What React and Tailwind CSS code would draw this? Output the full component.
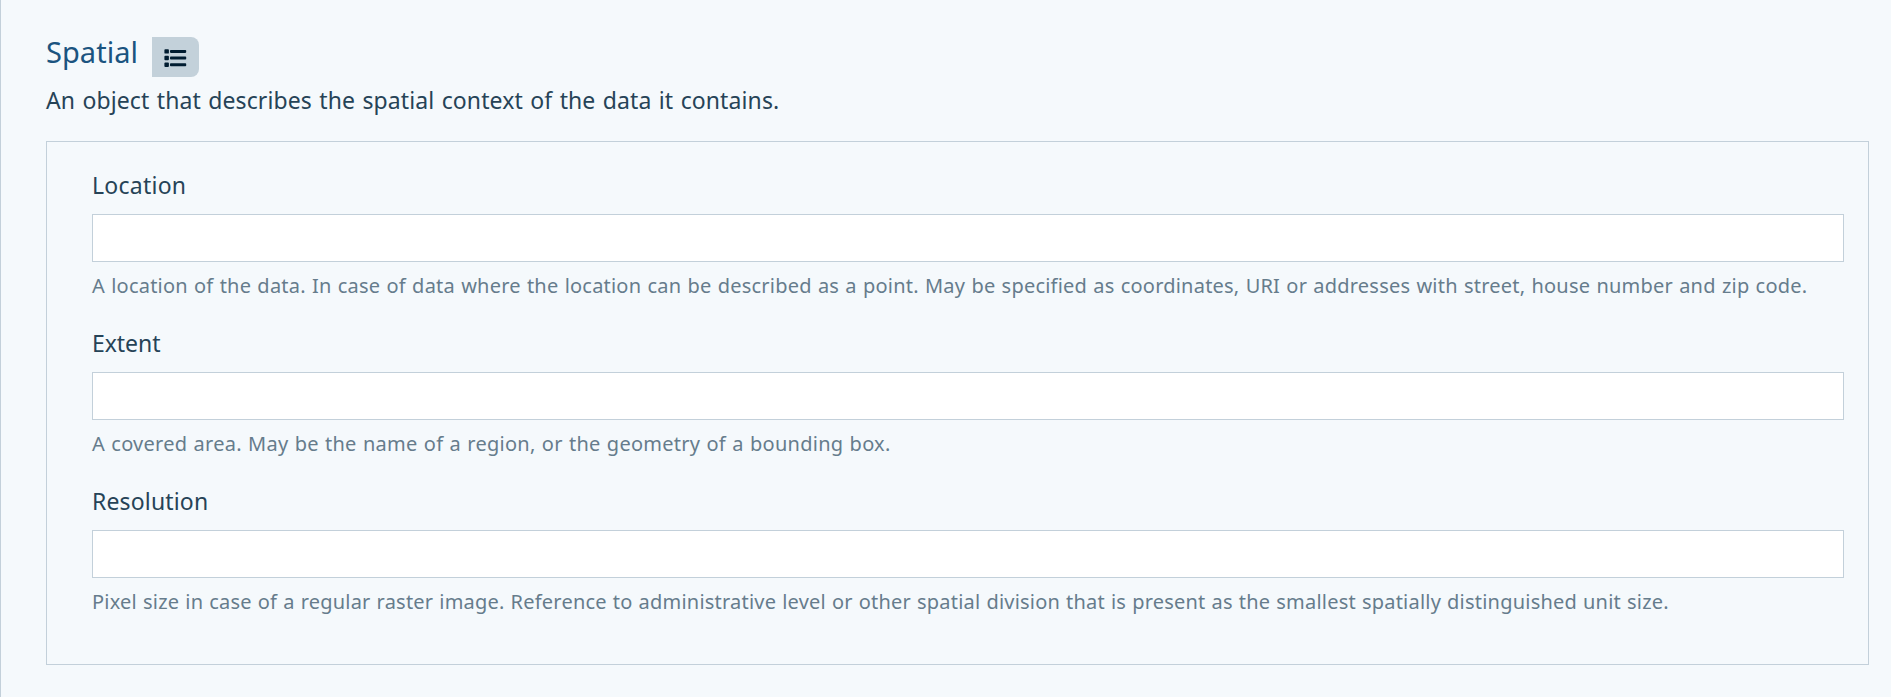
const fields = [
  {
    id: 'location',
    label: 'Location',
    labelTracking: 'tracking-[0.25px]',
    help: 'A location of the data. In case of data where the location can be described as a point. May be specified as coordinates, URI or addresses with street, house number and zip code.',
    helpTracking: 'tracking-[0.213px] [word-spacing:0.8px]',
  },
  {
    id: 'extent',
    label: 'Extent',
    labelTracking: 'tracking-[-0.05px]',
    help: 'A covered area. May be the name of a region, or the geometry of a bounding box.',
    helpTracking: 'tracking-[0.26px] [word-spacing:0.8px]',
  },
  {
    id: 'resolution',
    label: 'Resolution',
    labelTracking: 'tracking-[0.16px]',
    help: 'Pixel size in case of a regular raster image. Reference to administrative level or other spatial division that is present as the smallest spatially distinguished unit size.',
    helpTracking: 'tracking-[0.214px] [word-spacing:0.6px]',
  },
];

function ListIcon() {
  return (
    <svg className="shrink-0" width="23" height="18" viewBox="0 0 23 18" fill="#001c30" aria-hidden="true">
      {[0.2, 6.8, 13.5].map((y) => (
        <g key={y}>
          <rect x="0.4" y={y} width="4.5" height="4.4" rx="0.9" />
          <rect x="6" y={y + 0.8} width="16.2" height="2.9" rx="0.8" />
        </g>
      ))}
    </svg>
  );
}

function Field({ id, label, labelTracking, help, helpTracking }) {
  return (
    <div className="flex flex-col items-stretch">
      <label htmlFor={id} className={`h-[34px] text-[23px] leading-[34px] whitespace-nowrap text-[#264357] ${labelTracking}`}>
        {label}
      </label>
      <input id={id} type="text" className="mt-3 h-12 w-full border border-[#c3d0da] bg-white px-3 outline-none" />
      <p className={`mt-2 h-[30px] text-[20px] leading-[31px] whitespace-nowrap text-[#667c8c] ${helpTracking}`}>{help}</p>
    </div>
  );
}

export default function App() {
  return (
    <main className="h-[697px] w-full overflow-hidden border-l border-[#c3d0da] bg-[#f5f9fc] pt-8 pr-[22px] pl-[45px] font-['Noto_Sans',sans-serif]">
      <header className="flex h-[45px] items-start">
        <h2 className="w-[106px] text-[29px] leading-10 tracking-[0.05px] whitespace-nowrap text-[#1b5480]">Spatial</h2>
        <button
          type="button"
          aria-label="Spatial properties"
          className="mt-[5px] flex h-10 w-[47px] items-center justify-center rounded-r-lg bg-[#c3d1da] pt-0.5"
        >
          <ListIcon />
        </button>
      </header>
      <p className="mt-1.5 h-[34px] text-[23px] leading-[34px] tracking-[0.1px] [word-spacing:1.3px] whitespace-nowrap text-[#264357]">
        An object that describes the spatial context of the data it contains.
      </p>
      <section className="mt-6 flex h-[524px] flex-col gap-[26px] border border-[#c3d0da] pt-[26px] pr-6 pl-[45px]">
        {fields.map((field) => (
          <Field key={field.id} {...field} />
        ))}
      </section>
    </main>
  );
}
